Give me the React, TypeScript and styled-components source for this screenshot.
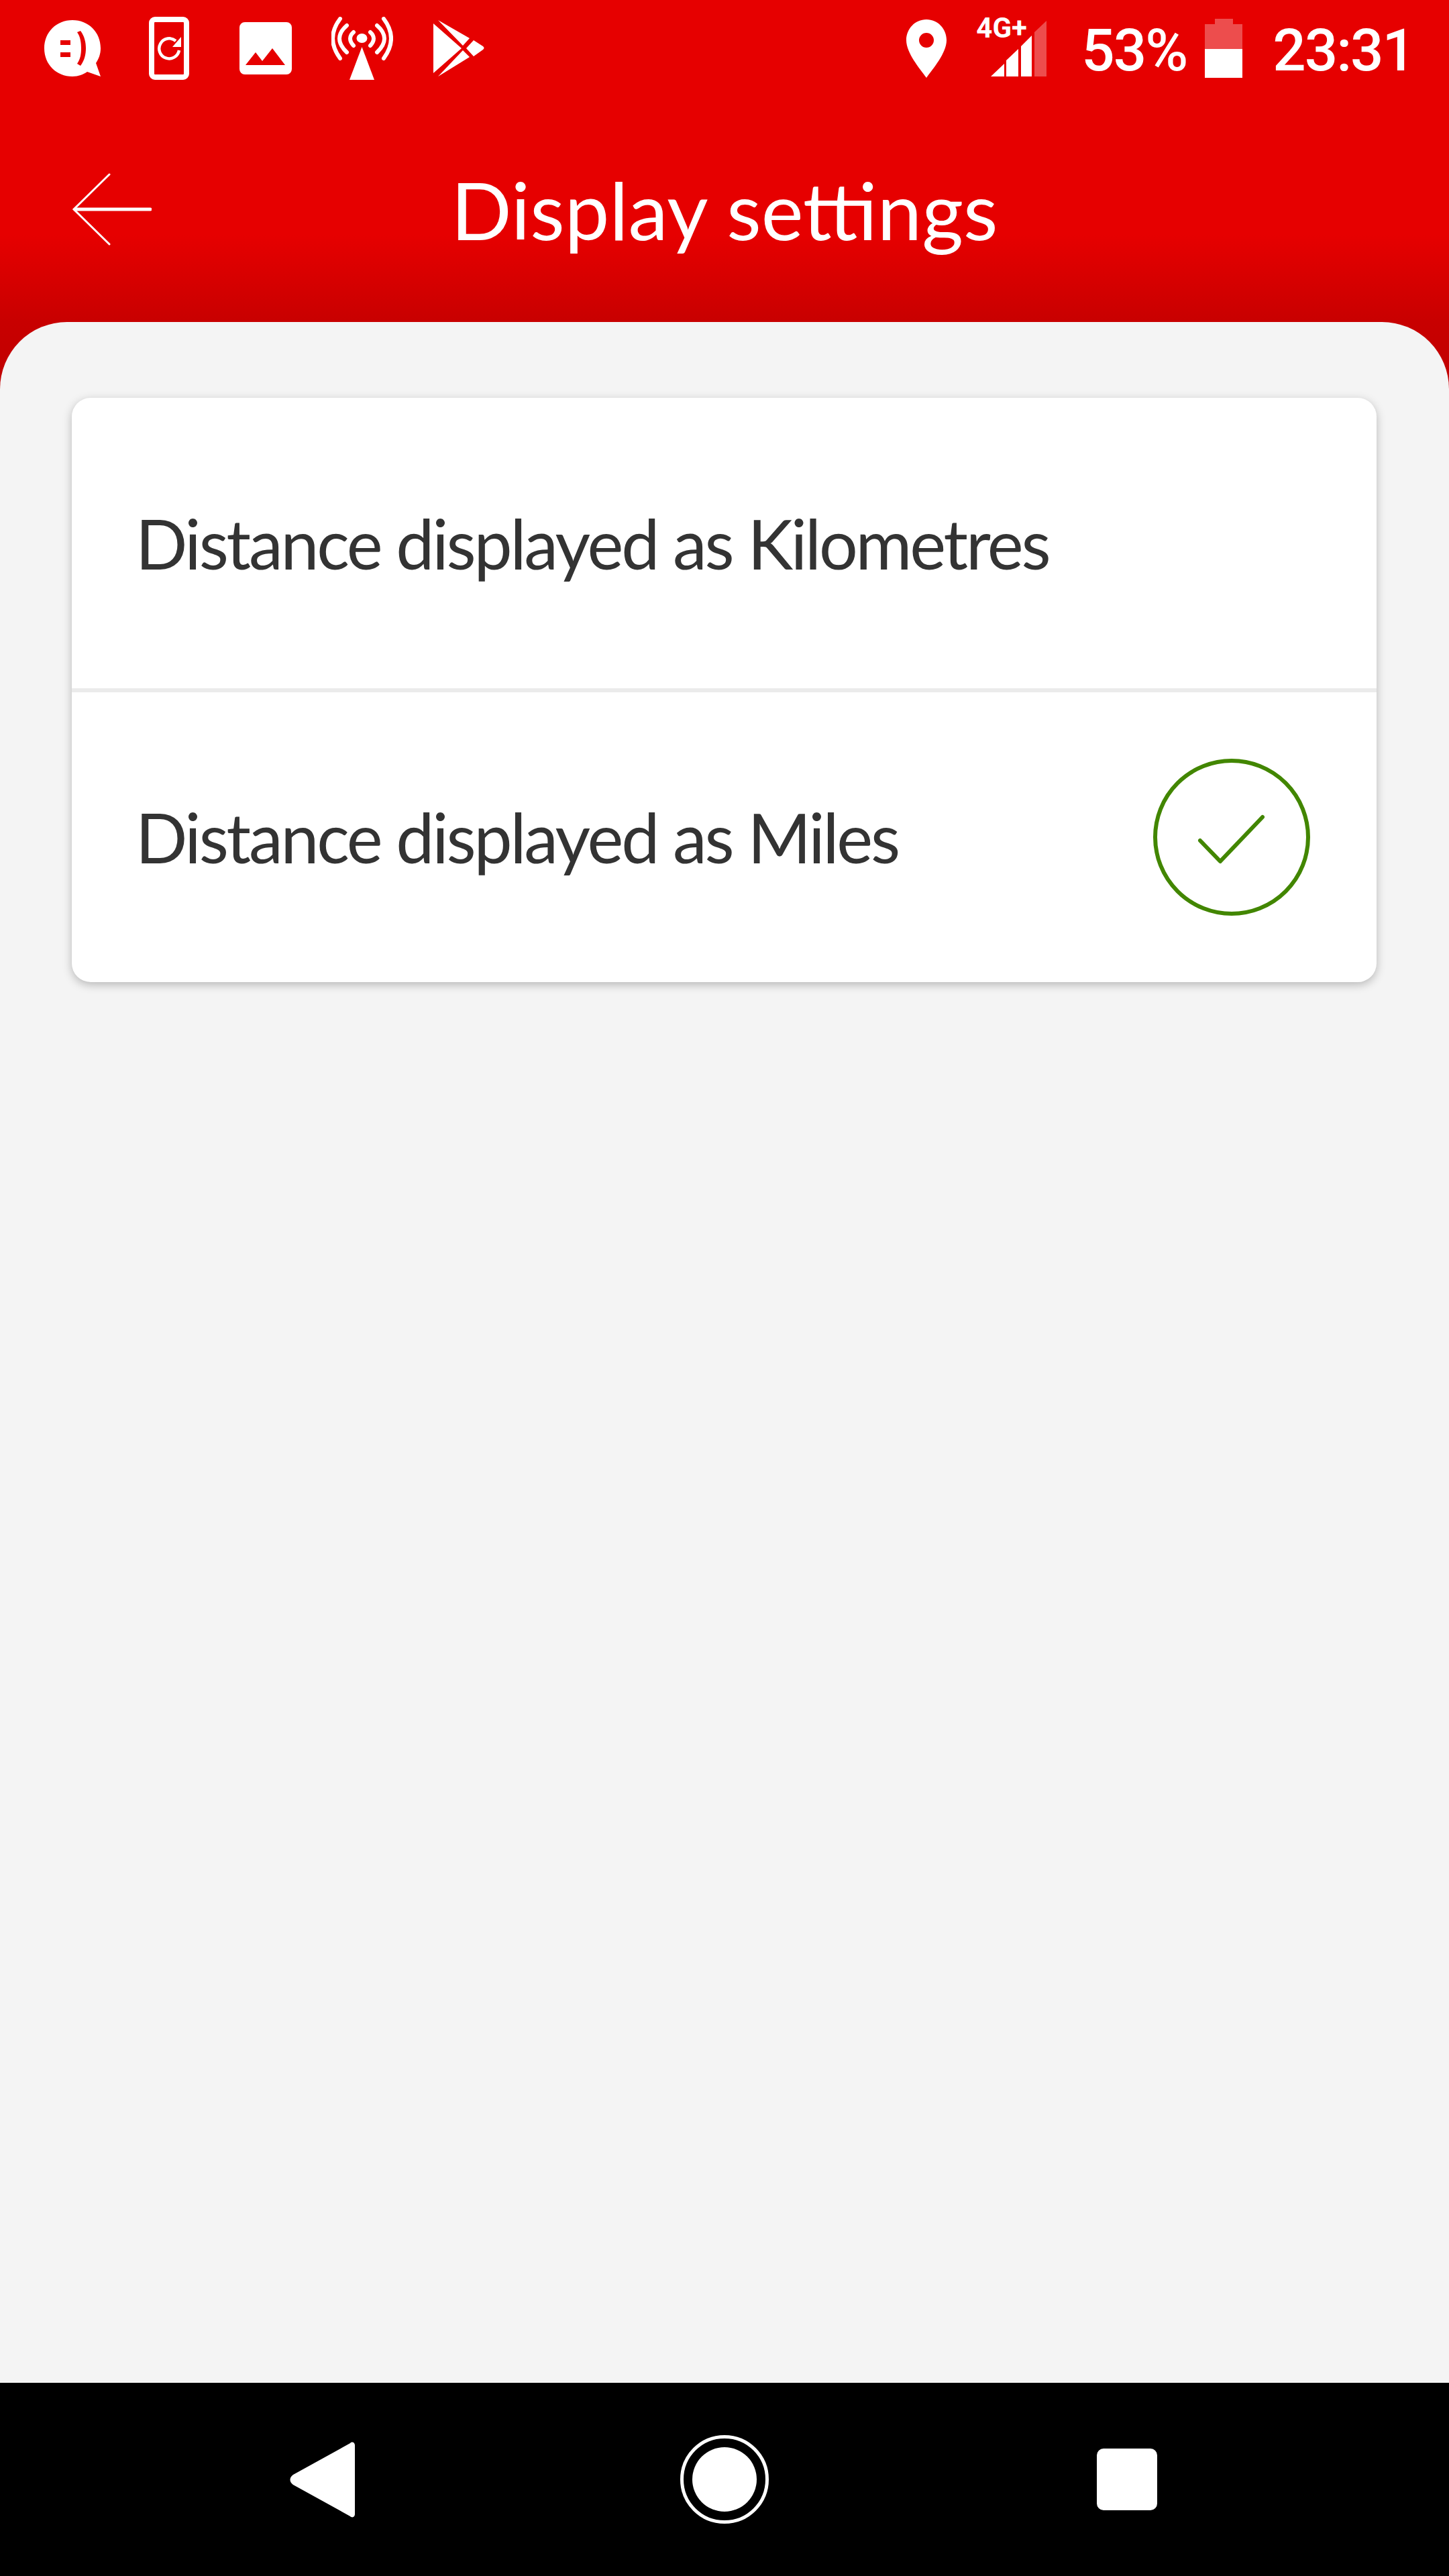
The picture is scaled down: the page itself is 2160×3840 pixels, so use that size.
import React from "react";
import styled, { createGlobalStyle } from "styled-components";

const GlobalStyle = createGlobalStyle`
  html, body {
    margin: 0;
    padding: 0;
    background: #000;
  }
  * {
    box-sizing: border-box;
  }
`;

function SpeechIcon() {
  return (
    <svg width="84" height="85" viewBox="0 0 84 85">
      <path
        fill="#fff"
        fillRule="evenodd"
        d="M42 0C18 0 0 18 0 42s18 42 42 42c9 0 16-3 22-7l20 7-7-20c4-6 7-13 7-22C84 18 66 0 42 0zM24 30h15v7H24zM24 48h15v7H24zM49 18l5-2c6 8 8 17 8 26s-2 18-8 26l-5-3c5-7 6-15 6-23s-1-17-6-24z"
      />
    </svg>
  );
}

function PhoneRefreshIcon() {
  return (
    <svg width="60" height="94" viewBox="0 0 60 94">
      <rect x="4" y="4" width="52" height="86" rx="5" fill="none" stroke="#fff" strokeWidth="8" />
      <path d="M40 36A15 15 0 1 0 45 50" fill="none" stroke="#fff" strokeWidth="4.5" />
      <path d="M48 30v15H35z" fill="#fff" />
    </svg>
  );
}

function ImageIcon() {
  return (
    <svg width="78" height="78" viewBox="0 0 78 78">
      <path
        fill="#fff"
        fillRule="evenodd"
        d="M8 0h62a8 8 0 0 1 8 8v62a8 8 0 0 1-8 8H8a8 8 0 0 1-8-8V8a8 8 0 0 1 8-8zM9 64h59L49 39 34 58 24 45z"
      />
    </svg>
  );
}

function AntennaIcon() {
  return (
    <svg width="92" height="94" viewBox="0 0 92 94" fill="none" stroke="#fff" strokeWidth="6" strokeLinecap="round">
      <path d="M13 3Q-9 32 13 62" />
      <path d="M23 13Q1 32 23 53" />
      <path d="M33 23Q23 32 33 43" />
      <path d="M78 3Q100 32 78 62" />
      <path d="M68 13Q90 32 68 53" />
      <path d="M58 23Q68 32 58 43" />
      <ellipse cx="45.5" cy="32" rx="8" ry="7" fill="#fff" stroke="none" />
      <path d="M45.5 45L64 94H27z" fill="#fff" stroke="none" />
    </svg>
  );
}

function PlayStoreIcon() {
  return (
    <svg width="78" height="86" viewBox="0 0 78 86" fill="#fff">
      <path d="M1 6v74l42-37z" />
      <path d="M8 1l47 27-10 11z" />
      <path d="M8 85l47-29-10-10z" />
      <path d="M61 31l14 9c2 2 2 3 0 5L61 55 50 43z" />
    </svg>
  );
}

function PinIcon() {
  return (
    <svg width="60" height="87" viewBox="0 0 60 87">
      <path
        fill="#fff"
        fillRule="evenodd"
        d="M30 0c17 0 30 14 30 31 0 19-20 42-30 56C20 73 0 50 0 31 0 14 13 0 30 0zm0 20a11 11 0 1 0 0 22 11 11 0 0 0 0-22z"
      />
    </svg>
  );
}

function SignalIcon() {
  return (
    <svg width="83" height="83" viewBox="0 0 83 83" fill="#fff">
      <path d="M0 83l20-19v19z" />
      <path d="M23 83V59l18-17v41z" />
      <path d="M45 83V38l16-16v61z" />
      <path d="M65 83V17L83 0v83z" opacity="0.3" />
    </svg>
  );
}

function BatteryIcon() {
  return (
    <svg width="56" height="88" viewBox="0 0 56 88" fill="#fff">
      <path d="M15 0h27v8h14v37H0V8h15z" opacity="0.3" />
      <rect x="0" y="45" width="56" height="43" />
    </svg>
  );
}

function BackArrow() {
  return (
    <svg width="119" height="108" viewBox="0 0 119 108" fill="none" stroke="#fff" strokeLinecap="round">
      <path d="M56 2L3 54l53 52" strokeWidth="3" />
      <path d="M5 54h112" strokeWidth="5" />
    </svg>
  );
}

function SelectedTick() {
  return (
    <svg width="234" height="234" viewBox="0 0 234 234" fill="none" stroke="#428600" strokeWidth="6">
      <circle cx="117" cy="117" r="114" />
      <path d="M70 122l30 31 63-66" strokeLinecap="round" strokeLinejoin="round" />
    </svg>
  );
}

function NavBack() {
  return (
    <svg width="97" height="113" viewBox="0 0 97 113">
      <path d="M90 2c3-3 7-1 7 3v103c0 4-4 6-7 3L5 64c-6-4-6-11 0-15z" fill="#fff" />
    </svg>
  );
}

const Page = styled.div`
  width: 2160px;
  height: 3840px;
  display: flex;
  flex-direction: column;
  overflow: hidden;
  font-family: "Lato", "Liberation Sans", sans-serif;
  background: #f4f4f4;
`;

const Top = styled.div`
  height: 580px;
  flex: none;
  display: flex;
  flex-direction: column;
  background: linear-gradient(#e60000 0, #e60000 350px, #c80000 480px, #c00000 100%);
`;

const StatusBar = styled.div`
  height: 144px;
  flex: none;
  display: flex;
  align-items: center;
  justify-content: space-between;
  padding: 0 52px 0 36px;
`;

const StatusGroup = styled.div`
  display: flex;
  align-items: center;
`;

const NotifySlot = styled.div`
  width: 144px;
  display: flex;
  justify-content: center;
`;

const SignalWrap = styled.div`
  position: relative;
  margin-left: 66px;
  display: flex;
`;

const NetworkTag = styled.span`
  position: absolute;
  left: -22px;
  top: -10px;
  font: 700 42px/1 "Roboto", sans-serif;
  color: #fff;
`;

const StatusText = styled.span<{ $gap: number }>`
  font: 500 87px/1 "Roboto", sans-serif;
  letter-spacing: -2px;
  color: #fff;
  margin-left: ${(p) => p.$gap}px;
  padding-top: 6px;
`;

const BatteryWrap = styled.div`
  margin-left: 27px;
  display: flex;
`;

const TitleBar = styled.div`
  height: 336px;
  flex: none;
  display: flex;
  align-items: center;
  position: relative;
  padding-left: 107px;
`;

const Title = styled.h1`
  position: absolute;
  left: 0;
  right: 0;
  margin: 0;
  text-align: center;
  font-size: 119px;
  font-weight: 400;
  color: #fff;
`;

const Sheet = styled.main`
  flex: 1;
  margin-top: -100px;
  padding: 113px 108px 0 107px;
  background: #f4f4f4;
  border-radius: 100px 100px 0 0;
`;

const Card = styled.section`
  background: #fff;
  border-radius: 28px;
  box-shadow: 0 4px 14px rgba(0, 0, 0, 0.25);
`;

const Row = styled.div`
  height: 432.5px;
  display: flex;
  align-items: center;
  justify-content: space-between;
  padding: 0 99px 0 95px;
  font-size: 102px;
  letter-spacing: -3.2px;
  color: #333;
`;

const Divider = styled.hr`
  height: 6px;
  margin: 0;
  border: 0;
  background: #ebebeb;
`;

const NavBar = styled.nav`
  height: 288px;
  flex: none;
  background: #000;
  padding: 0 180px;
  display: grid;
  grid-template-columns: 1fr 1fr 1fr;
  align-items: center;
  justify-items: center;
`;

const HomeRing = styled.div`
  width: 132px;
  height: 132px;
  border-radius: 50%;
  border: 5px solid #fff;
  display: flex;
  align-items: center;
  justify-content: center;
`;

const HomeDot = styled.div`
  width: 96px;
  height: 96px;
  border-radius: 50%;
  background: #fff;
`;

const RecentSquare = styled.div`
  width: 90px;
  height: 92px;
  border-radius: 10px;
  background: #fff;
`;

export default function App() {
  return (
    <Page>
      <GlobalStyle />
      <Top>
        <StatusBar>
          <StatusGroup>
            <NotifySlot><SpeechIcon /></NotifySlot>
            <NotifySlot><PhoneRefreshIcon /></NotifySlot>
            <NotifySlot><ImageIcon /></NotifySlot>
            <NotifySlot><AntennaIcon /></NotifySlot>
            <NotifySlot><PlayStoreIcon /></NotifySlot>
          </StatusGroup>
          <StatusGroup>
            <PinIcon />
            <SignalWrap>
              <NetworkTag>4G+</NetworkTag>
              <SignalIcon />
            </SignalWrap>
            <StatusText $gap={52}>53%</StatusText>
            <BatteryWrap><BatteryIcon /></BatteryWrap>
            <StatusText $gap={45}>23:31</StatusText>
          </StatusGroup>
        </StatusBar>
        <TitleBar>
          <BackArrow />
          <Title>Display settings</Title>
        </TitleBar>
      </Top>
      <Sheet>
        <Card>
          <Row>Distance displayed as Kilometres</Row>
          <Divider />
          <Row>
            Distance displayed as Miles
            <SelectedTick />
          </Row>
        </Card>
      </Sheet>
      <NavBar>
        <NavBack />
        <HomeRing><HomeDot /></HomeRing>
        <RecentSquare />
      </NavBar>
    </Page>
  );
}
